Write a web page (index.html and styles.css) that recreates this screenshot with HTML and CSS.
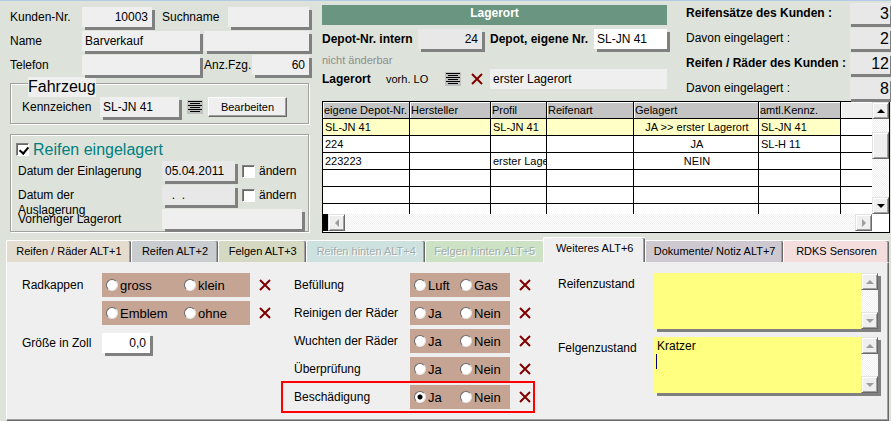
FILE: index.html
```
<!DOCTYPE html>
<html lang="de">
<head>
  <meta charset="UTF-8">
  <meta name="viewport" content="width=device-width, initial-scale=1.0">
  <title>Reifenlager</title>
  <link rel="stylesheet" href="styles.css">
</head>
<body>

  <svg class="symbols" aria-hidden="true">
    <symbol id="list" viewBox="0 0 16 14">
      <rect width="16" height="14" fill="#c0c0c0"/>
      <path d="M1 1.5h14M3 3.5h10M1 5.5h14M3 7.5h10M1 9.5h14M3 11.5h10" stroke="#000"/>
    </symbol>
    <symbol id="cross" viewBox="0 0 12 12">
      <path d="M1 1l10 10M11 1L1 11" fill="none" stroke="#800000" stroke-width="2"/>
    </symbol>
    <symbol id="up" viewBox="0 0 8 4"><path d="M0 4h8L4 0z" fill="currentColor"/></symbol>
    <symbol id="down" viewBox="0 0 8 4"><path d="M0 0h8L4 4z" fill="currentColor"/></symbol>
    <symbol id="left" viewBox="0 0 4 8"><path d="M4 0v8L0 4z" fill="currentColor"/></symbol>
    <symbol id="right" viewBox="0 0 4 8"><path d="M0 0v8l4-4z" fill="currentColor"/></symbol>
  </svg>

  <main class="top">
    <!-- Kunde, Fahrzeug, Einlagerung -->
    <section class="customer">
      <div class="row">
        <label class="w-label" for="kdnr">Kunden-Nr.</label>
        <input class="field num w-nr" id="kdnr" value="10003">
        <label class="such" for="such">Suchname</label>
        <input class="field fill" id="such">
      </div>
      <div class="row">
        <label class="w-label" for="name">Name</label>
        <input class="field w-name" id="name" value="Barverkauf">
        <input class="field fill second" aria-label="Name 2">
      </div>
      <div class="row">
        <label class="w-label" for="tel">Telefon</label>
        <input class="field w-name" id="tel">
        <label class="anz" for="anz">Anz.Fzg.</label>
        <input class="field num fill" id="anz" value="60">
      </div>

      <fieldset class="box vehicle">
        <legend>Fahrzeug</legend>
        <div class="row">
          <label class="w-kz" for="kz">Kennzeichen</label>
          <input class="field w-plate" id="kz" value="SL-JN 41">
          <button class="icon list" aria-label="Liste"><svg width="16" height="14"><use href="#list"/></svg></button>
          <button class="btn">Bearbeiten</button>
        </div>
      </fieldset>

      <div class="box storage">
        <label class="stored"><input type="checkbox" class="check" checked>Reifen eingelagert</label>
        <div class="row">
          <label class="w-date" for="ein">Datum der Einlagerung</label>
          <input class="field grey w-datefield" id="ein" value="05.04.2011">
          <label class="change"><input type="checkbox" class="check">ändern</label>
        </div>
        <div class="row">
          <label class="w-date two" for="aus">Datum der<br>Auslagerung</label>
          <input class="field grey w-datefield" id="aus" value="&nbsp; .&nbsp; .">
          <label class="change"><input type="checkbox" class="check">ändern</label>
        </div>
        <div class="row">
          <label class="w-date" for="vor">Vorheriger Lagerort</label>
          <input class="field fill" id="vor">
        </div>
      </div>
    </section>

    <section class="depot">
      <div class="depot-head">
        <div class="place">
          <h1 class="title">Lagerort</h1>
          <div class="row">
            <label class="bold w-depot" for="intern">Depot-Nr. intern</label>
            <input class="field grey num w-intern" id="intern" value="24" readonly>
            <label class="bold w-eigen" for="eigen">Depot, eigene Nr.</label>
            <input class="field white fill" id="eigen" value="SL-JN 41">
          </div>
          <p class="note">nicht änderbar</p>
          <div class="row">
            <label class="bold w-ort" for="ort">Lagerort</label>
            <span class="vorh">vorh. LO</span>
            <button class="icon" aria-label="Liste"><svg width="16" height="14"><use href="#list"/></svg></button>
            <button class="icon del-ort" aria-label="Löschen"><svg width="12" height="12"><use href="#cross"/></svg></button>
            <input class="field flat fill" id="ort" value="erster Lagerort">
          </div>
        </div>

        <div class="stats">
          <label class="bold" for="s1">Reifensätze des Kunden :</label><input class="field grey" id="s1" value="3" readonly>
          <label for="s2">Davon eingelagert :</label><input class="field grey" id="s2" value="2" readonly>
          <label class="bold" for="s3">Reifen / Räder des Kunden :</label><input class="field grey" id="s3" value="12" readonly>
          <label for="s4">Davon eingelagert :</label><input class="field grey" id="s4" value="8" readonly>
        </div>
      </div>

      <div class="list-box">
        <div class="list-main">
          <div class="list-rows">
            <table>
              <colgroup>
                <col class="c1"><col class="c2"><col class="c3"><col class="c4"><col class="c5"><col class="c6"><col>
              </colgroup>
              <thead>
                <tr><th>eigene Depot-Nr.</th><th>Hersteller</th><th>Profil</th><th>Reifenart</th><th>Gelagert</th><th>amtl.Kennz.</th><th class="empty"></th></tr>
              </thead>
              <tbody>
                <tr class="selected"><td>SL-JN 41</td><td></td><td>SL-JN 41</td><td></td><td>JA &gt;&gt; erster Lagerort</td><td>SL-JN 41</td><td></td></tr>
                <tr><td>224</td><td></td><td></td><td></td><td>JA</td><td>SL-H 11</td><td></td></tr>
                <tr><td>223223</td><td></td><td>erster Lage</td><td></td><td>NEIN</td><td></td><td></td></tr>
                <tr><td></td><td></td><td></td><td></td><td></td><td></td><td></td></tr>
                <tr><td></td><td></td><td></td><td></td><td></td><td></td><td></td></tr>
                <tr><td></td><td></td><td></td><td></td><td></td><td></td><td></td></tr>
              </tbody>
            </table>
          </div>
          <div class="scroll">
            <button class="arrow" aria-label="Nach oben"><svg width="8" height="4"><use href="#up"/></svg></button>
            <div class="thumb"></div>
            <button class="arrow" aria-label="Nach unten"><svg width="8" height="4"><use href="#down"/></svg></button>
          </div>
        </div>
        <div class="scroll-x">
          <button class="arrow off" aria-label="Nach links"><svg width="4" height="8"><use href="#left"/></svg></button>
          <button class="arrow off" aria-label="Nach rechts"><svg width="4" height="8"><use href="#right"/></svg></button>
        </div>
      </div>
    </section>
  </main>

  <!-- Register -->
  <nav class="tabs" role="tablist">
    <button class="tab t1" role="tab">Reifen / Räder ALT+1</button>
    <button class="tab t2" role="tab">Reifen ALT+2</button>
    <button class="tab t3" role="tab">Felgen ALT+3</button>
    <button class="tab t4" role="tab" disabled>Reifen hinten ALT+4</button>
    <button class="tab t5" role="tab" disabled>Felgen hinten ALT+5</button>
    <button class="tab t6 active" role="tab" aria-selected="true">Weiteres ALT+6</button>
    <button class="tab t7" role="tab">Dokumente/ Notiz ALT+7</button>
    <button class="tab t8" role="tab">RDKS Sensoren</button>
  </nav>

  <section class="panel">
    <div class="caps">
      <div class="option">
        <span class="option-label">Radkappen</span>
        <div class="radios" role="radiogroup" aria-label="Radkappen">
          <label><input type="radio" name="kappen">gross</label>
          <label><input type="radio" name="kappen">klein</label>
        </div>
        <button class="icon del" aria-label="Löschen"><svg width="12" height="12"><use href="#cross"/></svg></button>
      </div>
      <div class="option">
        <span class="option-label"></span>
        <div class="radios" role="radiogroup" aria-label="Emblem">
          <label><input type="radio" name="emblem">Emblem</label>
          <label><input type="radio" name="emblem">ohne</label>
        </div>
        <button class="icon del" aria-label="Löschen"><svg width="12" height="12"><use href="#cross"/></svg></button>
      </div>
      <div class="row size">
        <label class="option-label" for="zoll">Größe in Zoll</label>
        <input class="field white num w-zoll" id="zoll" value="0,0">
      </div>
    </div>

    <div class="checks">
      <div class="option">
        <span class="option-label">Befüllung</span>
        <div class="radios" role="radiogroup" aria-label="Befüllung">
          <label><input type="radio" name="luft">Luft</label>
          <label><input type="radio" name="luft">Gas</label>
        </div>
        <button class="icon del" aria-label="Löschen"><svg width="12" height="12"><use href="#cross"/></svg></button>
      </div>
      <div class="option">
        <span class="option-label">Reinigen der Räder</span>
        <div class="radios" role="radiogroup" aria-label="Reinigen der Räder">
          <label><input type="radio" name="rein">Ja</label>
          <label><input type="radio" name="rein">Nein</label>
        </div>
        <button class="icon del" aria-label="Löschen"><svg width="12" height="12"><use href="#cross"/></svg></button>
      </div>
      <div class="option">
        <span class="option-label">Wuchten der Räder</span>
        <div class="radios" role="radiogroup" aria-label="Wuchten der Räder">
          <label><input type="radio" name="wucht">Ja</label>
          <label><input type="radio" name="wucht">Nein</label>
        </div>
        <button class="icon del" aria-label="Löschen"><svg width="12" height="12"><use href="#cross"/></svg></button>
      </div>
      <div class="option">
        <span class="option-label">Überprüfung</span>
        <div class="radios" role="radiogroup" aria-label="Überprüfung">
          <label><input type="radio" name="pruef">Ja</label>
          <label><input type="radio" name="pruef">Nein</label>
        </div>
        <button class="icon del" aria-label="Löschen"><svg width="12" height="12"><use href="#cross"/></svg></button>
      </div>
      <div class="option marked">
        <span class="option-label">Beschädigung</span>
        <div class="radios" role="radiogroup" aria-label="Beschädigung">
          <label><input type="radio" name="schaden" checked>Ja</label>
          <label><input type="radio" name="schaden">Nein</label>
        </div>
        <button class="icon del" aria-label="Löschen"><svg width="12" height="12"><use href="#cross"/></svg></button>
      </div>
    </div>

    <div class="notes">
      <label for="reifen">Reifenzustand</label>
      <div class="memo">
        <textarea id="reifen"></textarea>
        <div class="scroll">
          <button class="arrow off" aria-label="Nach oben"><svg width="8" height="4"><use href="#up"/></svg></button>
          <button class="arrow off" aria-label="Nach unten"><svg width="8" height="4"><use href="#down"/></svg></button>
        </div>
      </div>
      <label for="felgen">Felgenzustand</label>
      <div class="memo">
        <textarea id="felgen">Kratzer
</textarea>
        <span class="caret"></span>
        <div class="scroll">
          <button class="arrow off" aria-label="Nach oben"><svg width="8" height="4"><use href="#up"/></svg></button>
          <button class="arrow off" aria-label="Nach unten"><svg width="8" height="4"><use href="#down"/></svg></button>
        </div>
      </div>
    </div>
  </section>

</body>
</html>
```

FILE: styles.css
```
* {
  box-sizing: border-box;
  margin: 0;
  padding: 0;
}

body {
  background-color: #dde3db;
  border-top: 1px solid #b4cbe8;
  color: #000;
  font: 12px/15px "Liberation Sans", Arial, sans-serif;
}

input, button, textarea {
  font: inherit;
  color: inherit;
  border: none;
  border-radius: 0;
}

.symbols {
  display: none;
}

.bold {
  font-weight: bold;
}

.top {
  display: flex;
  gap: 13px;
  height: 236px;
  padding-left: 10px;
}

/* Felder */
.row {
  display: flex;
  align-items: center;
  height: 20px;
  margin-bottom: 4px;
  white-space: nowrap;
}

.row > * {
  flex: none;
}

.field {
  height: 20px;
  padding: 0 4px 0 3px;
  background-color: #efefef;
  box-shadow: 3px 3px #808080;
  min-width: 0;
}

.row > .fill {
  flex: 1;
  width: 0;
}

.num {
  text-align: right;
}

.grey {
  background-color: #e8e8e8;
}

.white {
  background-color: #fff;
}

.flat {
  box-shadow: none;
}

.icon {
  display: flex;
  background: none;
}

/* Kunde */
.customer {
  flex: none;
  width: 299px;
  padding-top: 6px;
}

.w-label {
  width: 72px;
}

.w-nr {
  width: 70px;
}

.such {
  width: 76px;
  padding-left: 10px;
}

.w-name {
  width: 118px;
}

.second {
  margin-left: 4px;
}

.anz {
  width: 52px;
  padding-left: 4px;
}

.box {
  border: 1px solid #a0a0a0;
  box-shadow: 1px 1px #fff, inset 1px 1px #fff;
}

.vehicle {
  height: 41px;
  margin-top: 8px;
  padding-left: 11px;
}

.vehicle legend {
  float: left;
  margin: -7px 0 0 6px;
  background-color: #efefef;
  font-size: 16px;
  line-height: 20px;
}

.vehicle .row {
  clear: both;
}

.w-kz {
  width: 78px;
}

.w-plate {
  width: 79px;
}

.list {
  margin: 0 5px 0 8px;
}

.btn {
  width: 79px;
  height: 20px;
  background-color: #efefef;
  border: 1px solid;
  border-color: #fff #696969 #696969 #fff;
  box-shadow: inset -1px -1px #a0a0a0;
  font-size: 11px;
}

.storage {
  height: 98px;
  margin-top: 10px;
  padding: 5px 6px 0 7px;
}

.stored {
  display: flex;
  align-items: center;
  gap: 4px;
  height: 18px;
  margin: 0 0 3px -2px;
  color: #008080;
  font-size: 16px;
}

.check {
  appearance: none;
  flex: none;
  width: 13px;
  height: 13px;
  background-color: #fff;
  border: 1px solid;
  border-color: #808080 #fff #fff #808080;
  box-shadow: inset 1px 1px #696969;
}

.check:checked::before {
  content: "";
  display: block;
  width: 4px;
  height: 7px;
  margin: 1px 0 0 4px;
  border: solid #000;
  border-width: 0 2px 2px 0;
  transform: rotate(40deg);
}

.w-date {
  width: 144px;
}

.two {
  height: 14px;
}

.w-datefield {
  width: 73px;
}

.change {
  display: flex;
  align-items: center;
  gap: 4px;
  margin-left: 7px;
}

/* Lagerort */
.depot {
  flex: 1;
  min-width: 0;
  padding: 2px 1px 0 0;
}

.depot-head {
  display: flex;
  gap: 19px;
  height: 98px;
}

.place {
  flex: 1;
  min-width: 0;
  padding-top: 2px;
}

.title {
  height: 20px;
  margin-bottom: 4px;
  background-color: #6a9580;
  color: #fff;
  font-size: 12px;
  line-height: 16px;
  text-align: center;
}

.w-depot {
  width: 96px;
}

.w-intern {
  width: 64px;
}

.w-eigen {
  width: 112px;
  padding-left: 8px;
}

.note {
  height: 16px;
  color: #8c8c8c;
  font-size: 11px;
}

.w-ort {
  width: 64px;
}

.vorh {
  width: 59px;
  font-size: 11px;
}

.del-ort {
  margin: 0 7px 0 10px;
}

.stats {
  flex: none;
  display: grid;
  grid-template-columns: 164px 40px;
  grid-auto-rows: 21px;
  row-gap: 4px;
  line-height: 20px;
}

.stats .field {
  width: 40px;
  height: 21px;
  padding-right: 1px;
  box-shadow: 1px 3px #808080;
  font-size: 16px;
  text-align: right;
}

.list-box {
  height: 132px;
  border: 1px solid #000;
  background-color: #fff;
}

.list-main {
  display: flex;
  height: 112px;
}

.list-rows {
  flex: 1;
  min-width: 0;
  overflow: hidden;
}

table {
  width: 100%;
  table-layout: fixed;
  border-collapse: separate;
  border-spacing: 0;
  font-size: 11px;
  line-height: 16px;
}

.c1 { width: 87px; }
.c2 { width: 81px; }
.c3 { width: 56px; }
.c4 { width: 87px; }
.c5 { width: 125px; }
.c6 { width: 82px; }

th, td {
  height: 17px;
  padding: 0 0 0 2px;
  border-right: 1px solid #000;
  border-bottom: 1px solid #000;
  font-weight: normal;
  text-align: left;
  white-space: nowrap;
  overflow: hidden;
}

th {
  background-color: #c4c4c4;
  padding-left: 1px;
  box-shadow: inset 1px 1px #fff;
}

.empty {
  background-color: #efefef;
}

th:last-child, td:last-child {
  border-right: none;
}

td:nth-child(5) {
  text-align: center;
}

.selected td {
  background-color: #ffffc6;
}

.selected td:last-child {
  background-color: #fff;
}

/* Bildlaufleisten */
.scroll, .scroll-x {
  display: flex;
  justify-content: space-between;
  background: repeating-conic-gradient(#f0f0f0 0 25%, #fff 0 50%) 0 0 / 2px 2px;
}

.scroll {
  flex: none;
  flex-direction: column;
  width: 17px;
}

.arrow, .thumb {
  display: flex;
  align-items: center;
  justify-content: center;
  width: 17px;
  height: 17px;
  background-color: #efefef;
  border: 1px solid;
  border-color: #e3e3e3 #696969 #696969 #e3e3e3;
  box-shadow: inset 1px 1px #fff, inset -1px -1px #a0a0a0;
}

.thumb {
  height: 27px;
  margin: 0 0 26px;
}

.off {
  color: #9c9c9c;
}

.scroll-x {
  height: 17px;
  margin-right: 17px;
  border-left: 5px solid #000;
}

/* Register */
.tabs {
  display: flex;
  align-items: flex-end;
  height: 25px;
  padding: 0 2px 0 6px;
}

.tab {
  height: 22px;
  border: 1px solid #fff;
  border-width: 1px 0 0 1px;
  border-radius: 2px 2px 0 0;
  box-shadow: inset -1px 0 #696969, inset -2px 0 #a0a0a0;
  font-size: 11px;
  white-space: nowrap;
}

.tab:disabled {
  color: #a3abab;
  text-shadow: 1px 1px #fff;
}

.t1 { flex: 125 1 0; background-color: #e3dccf; }
.t2 { flex: 87 1 0; background-color: #c9cdd0; }
.t3 { flex: 88 1 0; background-color: #d6d9c2; }
.t4 { flex: 119 1 0; background-color: #cde2df; }
.t5 { flex: 118 1 0; background-color: #cde2c4; box-shadow: none; }
.t6 { flex: 102 1 0; }
.t7 { flex: 138 1 0; background-color: #cec9d0; }
.t8 { flex: 106 1 0; background-color: #f3dedd; }

.tab.active {
  height: 25px;
  padding-bottom: 3px;
  background-color: #efefef;
}

.panel {
  display: flex;
  align-items: flex-start;
  margin: 0 2px 0 6px;
  min-height: 159px;
  padding: 10px 10px 0 15px;
  background-color: #efefef;
  border: 1px solid;
  border-color: #efefef #696969 #696969 #fff;
  box-shadow: inset -1px -1px #a0a0a0;
}

.caps {
  width: 263px;
}

.checks {
  width: 246px;
}

.option {
  display: flex;
  align-items: center;
  height: 24px;
  margin-bottom: 4px;
}

.option-label {
  width: 80px;
}

.checks .option-label {
  width: 125px;
  padding-left: 9px;
}

.radios {
  display: grid;
  grid-template-columns: 78px 1fr;
  align-items: center;
  width: 148px;
  height: 24px;
  padding-left: 4px;
  background-color: #c6a494;
  font-size: 13px;
}

.checks .radios {
  grid-template-columns: 46px 1fr;
  width: 100px;
}

.radios label {
  display: flex;
  align-items: center;
  gap: 2px;
}

.radios input {
  appearance: none;
  width: 12px;
  height: 12px;
  border: 1px solid;
  border-color: #696969 #e3e3e3 #e3e3e3 #696969;
  border-radius: 50%;
  background-color: #fff;
}

.radios input:checked {
  background-image: radial-gradient(#000 2px, transparent 3px);
}

.del {
  margin-left: 9px;
}

/* hervorgehobene Zeile */
.marked {
  outline: 2px solid #f00;
  outline-offset: 2px;
}

.size {
  margin-top: 8px;
}

.w-zoll {
  width: 48px;
}

.notes {
  flex: 1;
  display: grid;
  grid-template-columns: 96px 1fr;
  row-gap: 8px;
  padding-left: 27px;
  line-height: 23px;
}

.memo {
  position: relative;
  display: flex;
  height: 56px;
  box-shadow: 3px 3px #808080;
}

.memo textarea {
  flex: 1;
  min-width: 0;
  padding: 2px 3px;
  background-color: #ffff80;
  line-height: 15px;
  resize: none;
  overflow: hidden;
}

.caret {
  position: absolute;
  left: 2px;
  top: 17px;
  width: 1px;
  height: 15px;
  background-color: #000080;
}
```
